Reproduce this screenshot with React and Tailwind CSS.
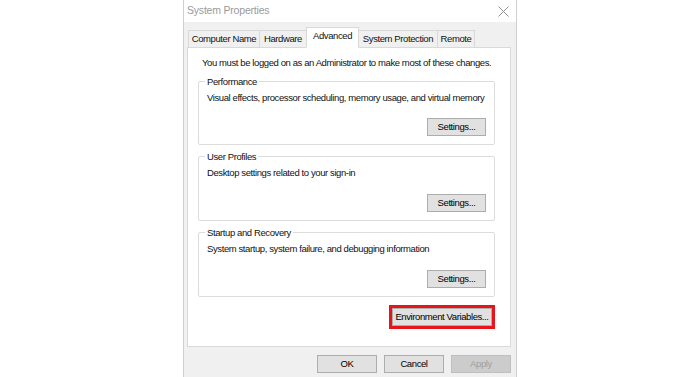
import React from 'react';

const tabs = [
    { label: 'Computer Name', w: 'w-[72px]' },
    { label: 'Hardware', w: 'w-[48px]' },
    { label: 'Advanced', w: 'w-[53px]', active: true },
    { label: 'System Protection', w: 'w-[80px]' },
    { label: 'Remote', w: 'w-[38px]' },
];

const groups = [
    { title: 'Performance', text: 'Visual effects, processor scheduling, memory usage, and virtual memory', h: 'h-[64px]' },
    { title: 'User Profiles', text: 'Desktop settings related to your sign-in', h: 'h-[65px]' },
    { title: 'Startup and Recovery', text: 'System startup, system failure, and debugging information', h: 'h-[65px]' },
];

const Button = ({ children, className = '', disabled }) => (
    <button
        className={`h-[18px] border flex items-center justify-center leading-none whitespace-nowrap ${disabled
            ? 'bg-[#cccccc] border-[#bfbfbf] text-[#a0a0a0]'
            : 'bg-[#e1e1e1] border-[#adadad] text-black'
            } ${className}`}
    >
        {children}
    </button>
);

const GroupBox = ({ title, text, h }) => (
    <div className={`relative ${h} border border-[#dcdcdc] rounded-[2px] flex flex-col pl-[8px] pr-[8px]`}>
        <span className="absolute -top-[7px] left-[6px] bg-white px-[2px] leading-[13px]">{title}</span>
        <div className="mt-[9px] leading-[13px] whitespace-nowrap">{text}</div>
        <div className="mt-auto mb-[8px] flex justify-end">
            <Button className="w-[59px]">Settings...</Button>
        </div>
    </div>
);

export default function App() {
    return (
        <div className="w-[700px] h-[377px] bg-white flex overflow-hidden font-['Liberation_Sans',Arial,sans-serif] text-[9.5px] tracking-[-0.4px] text-[#111]">
            <div className="ml-[183px] w-[334px] h-full border-x border-[#cfcfcf] bg-[#f0f0f0] flex flex-col">
                {/* Title bar */}
                <div className="h-[22px] bg-white flex items-center justify-between pl-[3px] pr-[7px]">
                    <span className="text-[10.5px] tracking-[-0.2px] text-[#9a9a9a]">System Properties</span>
                    <svg width="11" height="11" viewBox="0 0 11 11" stroke="#8f8f8f" strokeWidth="1">
                        <path d="M0.5 0.5 L10.5 10.5 M10.5 0.5 L0.5 10.5" />
                    </svg>
                </div>

                {/* Tabs */}
                <div className="pl-[4px] pt-[6px] flex items-end h-[26px] relative z-10">
                    {tabs.map((t) => (
                        <div
                            key={t.label}
                            className={`${t.w} flex items-center justify-center whitespace-nowrap border border-[#d9d9d9] -ml-px first:ml-0 ${t.active
                                ? 'h-[21px] bg-white border-b-white pb-[3px] z-10'
                                : 'h-[18px] bg-[#f0f0f0]'
                                }`}
                        >
                            {t.label}
                        </div>
                    ))}
                </div>

                {/* Panel */}
                <div className="ml-[3px] w-[324px] h-[300px] -mt-px bg-white border border-[#d9d9d9] flex flex-col pl-[10px] pr-[15px]">
                    <div className="mt-[8px] pl-[4px] leading-[13px] whitespace-nowrap">You must be logged on as an Administrator to make most of these changes.</div>
                    <div className="mt-[12px] flex flex-col gap-[11px]">
                        {groups.map((g) => (
                            <GroupBox key={g.title} {...g} />
                        ))}
                    </div>
                    <div className="mt-[8px] flex justify-end">
                        <div className="border-[3px] border-[#e8141c]">
                            <Button className="w-[100px] h-[17px]">Environment Variables...</Button>
                        </div>
                    </div>
                </div>

                {/* Footer buttons */}
                <div className="mt-[8px] flex justify-end gap-[7px] pr-[5px]">
                    <Button className="w-[60px]">OK</Button>
                    <Button className="w-[60px]">Cancel</Button>
                    <Button className="w-[60px]" disabled>Apply</Button>
                </div>
            </div>
        </div>
    );
}
